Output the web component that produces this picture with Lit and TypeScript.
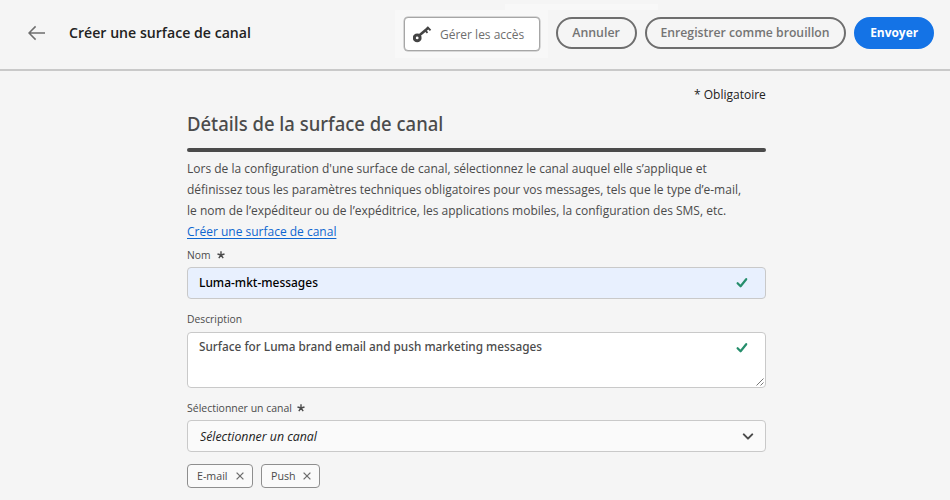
import { LitElement, html, css } from "lit";
import { customElement, property } from "lit/decorators.js";

const star = html`<svg class="star" viewBox="0 0 8 8" width="8" height="8">
  <path d="M4 4V.3M4 4 .5 3M4 4l3.5-1M4 4 1.8 7.2M4 4l2.2 3.2" />
</svg>`;

const check = html`<svg class="check" viewBox="0 0 12 12" width="12" height="12">
  <path d="M1.6 6.2 4.6 9.3 10.2 2.2" />
</svg>`;

@customElement("channel-tag")
export class ChannelTag extends LitElement {
  @property() label = "";

  static styles = css`
    :host {
      display: flex;
      align-items: center;
      justify-content: space-between;
      box-sizing: border-box;
      height: 24px;
      padding: 0 8px 0 9px;
      border: 1px solid #8e8e8e;
      border-radius: 4px;
      background: #fafafa;
      color: #4b4b4b;
      font-size: 11px;
      line-height: 22px;
    }
    span {
      transform: scaleX(0.97);
      transform-origin: left;
    }
    svg {
      display: block;
      fill: none;
      stroke: #6e6e6e;
      stroke-width: 1.3;
    }
  `;

  render() {
    return html`<span>${this.label}</span>
      <svg viewBox="0 0 8 8" width="8" height="8"><path d="M.6.6l6.8 6.8M7.4.6.6 7.4" /></svg>`;
  }
}

@customElement("app-root")
export class AppRoot extends LitElement {
  static styles = css`
    :host {
      display: block;
      height: 500px;
      overflow: hidden;
      background: #f5f5f5;
      color: #4b4b4b;
      font-family: "Open Sans", "Noto Sans", sans-serif;
      font-size: 13px;
    }
    svg {
      display: block;
      flex: none;
    }
    /* Slightly condensed lettering */
    .t {
      display: block;
      width: max-content;
      transform: scaleX(var(--sx, 0.9225));
      transform-origin: left;
      white-space: nowrap;
    }
    header {
      display: flex;
      align-items: center;
      box-sizing: border-box;
      height: 71px;
      padding: 0 16px 4px 28px;
      border-bottom: 2px solid #c9c9c9;
    }
    .back {
      fill: none;
      stroke: #6e6e6e;
      stroke-width: 1.5;
      margin-right: 23px;
    }
    h1 {
      --sx: 0.975;
      margin: 0 auto 0 0;
      color: #222;
      font-size: 14.5px;
      font-weight: 600;
      line-height: 20px;
    }
    .access-area {
      position: relative;
      box-sizing: border-box;
      width: 153px;
      height: 48px;
      padding: 7px 8px 7px 9px;
      margin-top: 3px;
      background: #f8f8f8;
    }
    .access-area::before {
      content: "";
      position: absolute;
      left: 110px;
      top: -6px;
      width: 153px;
      height: 6px;
      background: #f8f8f8;
    }
    .access {
      display: flex;
      align-items: center;
      gap: 8px;
      box-sizing: border-box;
      height: 34px;
      padding: 0 0 0 8px;
      border: 1px solid #a6a6a6;
      border-radius: 4px;
      box-shadow: 0 0 0 0.5px #b8b8b8;
      background: #fff;
      color: #6e6e6e;
    }
    .key-bow {
      fill: none;
      stroke: #444;
      stroke-width: 3;
    }
    .key-blade {
      fill: none;
      stroke: #444;
      stroke-width: 2.6;
    }
    .key-bit {
      fill: none;
      stroke: #444;
      stroke-width: 1.9;
    }
    .pill {
      display: flex;
      justify-content: center;
      box-sizing: border-box;
      height: 32px;
      border: 2px solid #6e6e6e;
      border-radius: 16px;
      color: #747474;
      font-weight: 600;
      line-height: 27px;
      margin-left: 8px;
    }
    .pill .t {
      transform-origin: center;
    }
    .cancel {
      --sx: 0.95;
      width: 81px;
    }
    .draft {
      --sx: 0.939;
      width: 201px;
    }
    .send {
      --sx: 0.918;
      width: 80px;
      border-color: #1473e6;
      background: #1473e6;
      color: #fff;
      font-weight: 700;
    }
    main {
      width: 579px;
      margin-left: 187px;
      padding-top: 13px;
    }
    .required {
      color: #222;
      line-height: 20px;
    }
    .required .t {
      margin-left: auto;
      transform-origin: right;
    }
    h2 {
      --sx: 0.947;
      margin: 6px 0 11px;
      font-family: "Noto Sans", "Open Sans", sans-serif;
      font-size: 19.5px;
      font-weight: 500;
      line-height: 27px;
    }
    .rule {
      height: 4px;
      border-radius: 2px;
      background: #4b4b4b;
    }
    .intro {
      margin: 6px 0 0;
      line-height: 21px;
    }
    .link {
      color: #0d66d0;
      text-decoration: underline;
      text-underline-offset: 2px;
      text-decoration-thickness: 1px;
    }
    .label {
      --sx: 0.937;
      display: flex;
      align-items: center;
      gap: 4.5px;
      height: 16px;
      font-size: 11px;
      line-height: 16px;
    }
    .star {
      fill: none;
      stroke: #4b4b4b;
      stroke-width: 1.4;
    }
    .field {
      display: flex;
      justify-content: space-between;
      box-sizing: border-box;
      height: 32px;
      padding: 0 17px 0 11px;
      border: 1px solid #c9c9c9;
      border-radius: 4px;
      font-family: "Noto Sans", "Open Sans", sans-serif;
      font-weight: 500;
      line-height: 29px;
    }
    .check {
      fill: none;
      stroke: #268e6c;
      stroke-width: 2.2;
      stroke-linecap: round;
      stroke-linejoin: round;
      margin-top: 9px;
    }
    .name-label {
      margin-top: 5px;
    }
    .name {
      --sx: 0.919;
      margin-top: 4px;
      background: #e8f0fe;
      color: #000;
    }
    .description-label {
      margin-top: 12px;
    }
    .description {
      --sx: 0.906;
      position: relative;
      height: 56px;
      margin-top: 5px;
      background: #fff;
      line-height: 27px;
    }
    .grip {
      position: absolute;
      right: 1px;
      bottom: 1px;
      stroke: #555;
      stroke-width: 0.8;
    }
    .channel-label {
      --sx: 0.953;
      gap: 0;
      margin-top: 12px;
    }
    .channel {
      --sx: 0.949;
      margin-top: 4px;
      padding-left: 12px;
      padding-right: 11px;
      background: #fafafa;
      color: #222;
      font-family: "Open Sans", "Noto Sans", sans-serif;
      font-style: italic;
      font-weight: 400;
      line-height: 31px;
    }
    .chevron {
      fill: none;
      stroke: #4b4b4b;
      stroke-width: 2;
      stroke-linecap: round;
      stroke-linejoin: round;
      margin-top: 12px;
    }
    .tags {
      display: flex;
      gap: 8px;
      margin-top: 12px;
    }
    .email-tag {
      width: 66px;
    }
    .push-tag {
      width: 59px;
    }
  `;

  render() {
    return html`
      <header>
        <svg class="back" viewBox="0 0 18 16" width="18" height="16">
          <path d="M17 8H1M7.6 1.4 1 8l6.6 6.6" />
        </svg>
        <h1><span class="t">Créer une surface de canal</span></h1>
        <div class="access-area">
          <div class="access">
            <svg viewBox="0 0 19 18" width="19" height="18">
              <circle class="key-bow" cx="4.2" cy="12.9" r="2.9" />
              <path class="key-blade" d="M6.2 10.4 15.4 2.8" />
              <path class="key-bit" d="M14.2 1.8l3.3 3.5M12 5.2l2.5 2.6M4.6 9.6l3.2 2.6" />
            </svg>
            <span class="t">Gérer les accès</span>
          </div>
        </div>
        <div class="pill cancel"><span class="t">Annuler</span></div>
        <div class="pill draft"><span class="t">Enregistrer comme brouillon</span></div>
        <div class="pill send"><span class="t">Envoyer</span></div>
      </header>
      <main>
        <div class="required"><span class="t">* Obligatoire</span></div>
        <h2><span class="t">Détails de la surface de canal</span></h2>
        <div class="rule"></div>
        <p class="intro">
          <span class="t">Lors de la configuration d'une surface de canal, sélectionnez le canal auquel elle s’applique et</span>
          <span class="t">définissez tous les paramètres techniques obligatoires pour vos messages, tels que le type d’e-mail,</span>
          <span class="t">le nom de l’expéditeur ou de l’expéditrice, les applications mobiles, la configuration des SMS, etc.</span>
          <a class="t link">Créer une surface de canal</a>
        </p>
        <div class="label name-label"><span class="t">Nom</span>${star}</div>
        <div class="field name"><span class="t">Luma-mkt-messages</span>${check}</div>
        <div class="label description-label"><span class="t">Description</span></div>
        <div class="field description">
          <span class="t">Surface for Luma brand email and push marketing messages</span>${check}
          <svg class="grip" viewBox="0 0 8 8" width="8" height="8">
            <path d="M.5 7.5l7-7M4.5 7.5l3-3" />
          </svg>
        </div>
        <div class="label channel-label"><span class="t">Sélectionner un canal</span>${star}</div>
        <div class="field channel">
          <span class="t">Sélectionner un canal</span>
          <svg class="chevron" viewBox="0 0 12 8" width="12" height="8">
            <path d="M1.8 1.4 6 5.6l4.2-4.2" />
          </svg>
        </div>
        <div class="tags">
          <channel-tag class="email-tag" label="E-mail"></channel-tag>
          <channel-tag class="push-tag" label="Push"></channel-tag>
        </div>
      </main>
    `;
  }
}
